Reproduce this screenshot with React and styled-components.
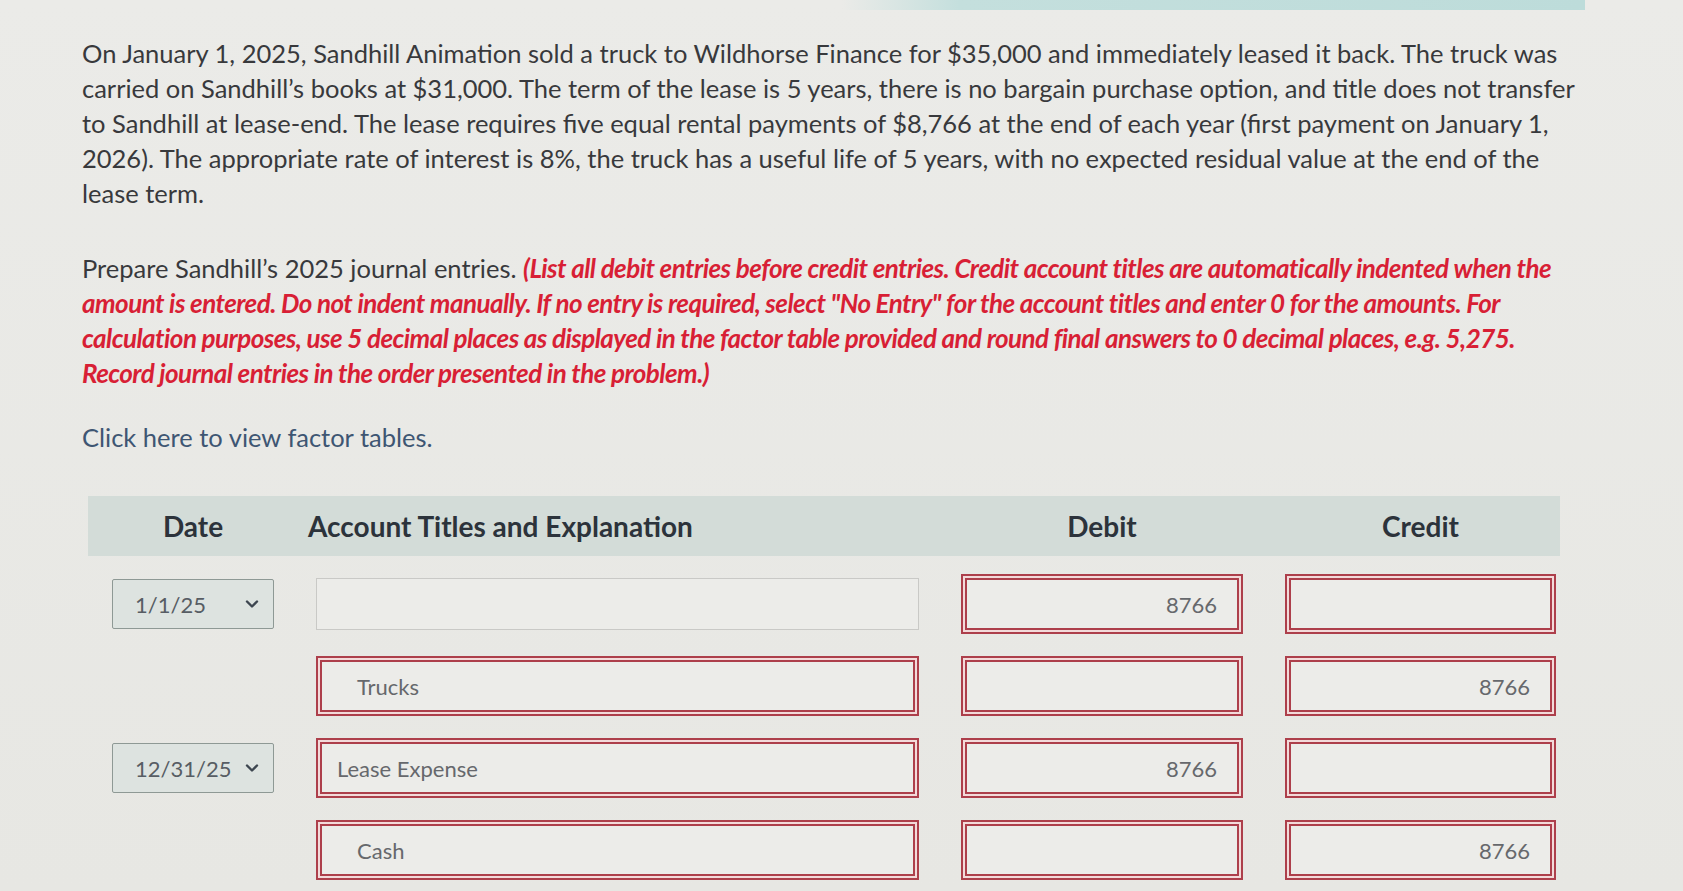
import React from 'react';
import styled, { createGlobalStyle } from 'styled-components';

const GlobalStyle = createGlobalStyle`
  body {
    margin: 0;
    background: #e9e9e6;
    font-family: Lato, "Open Sans", sans-serif;
    color: #3a3b3e;
  }
`;

const Page = styled.div`
  min-height: 891px;
  background: linear-gradient(to bottom, #ebebe8, #e7e7e3);
  overflow: hidden;
`;

const TopStrip = styled.div`
  height: 10px;
  background: linear-gradient(
    to right,
    transparent 0,
    transparent 50%,
    #c4dfdd 57%,
    #bddcda 94.2%,
    transparent 94.2%
  );
`;

const Content = styled.div`
  padding: 26px 0 0 82px;
`;

const Paragraph = styled.div`
  font-size: 25.5px;
  line-height: 35px;
  color: #38393c;
  margin-top: ${(p) => p.$gap || 0}px;
`;

const Line = styled.div`
  white-space: nowrap;
`;

const Warn = styled.span`
  color: #d81f35;
  font-size: 26px;
  font-weight: 700;
  font-style: italic;
  letter-spacing: -0.55px;
`;

const FactorLink = styled.div`
  margin-top: 29px;
  font-size: 25.5px;
  line-height: 35px;
  color: #3e5673;
  cursor: pointer;
`;

const Table = styled.div`
  margin: 41px 0 0 6px;
  width: 1472px;
`;

const Grid = styled.div`
  display: grid;
  grid-template-columns: 162px 603px 282px 271px;
  column-gap: 42px;
  padding-left: 24px;
  align-items: center;
`;

const Header = styled(Grid)`
  height: 60px;
  background: #d3dcd8;
`;

const HeadLabel = styled.div`
  font-size: 28px;
  font-weight: 700;
  color: #2c333b;
  text-align: ${(p) => p.$align || 'center'};
  margin-left: ${(p) => p.$shift || 0}px;
`;

const Rows = styled.div`
  display: flex;
  flex-direction: column;
  gap: 22px;
  margin-top: 18px;
`;

const Select = styled.div`
  height: 50px;
  box-sizing: border-box;
  display: flex;
  align-items: center;
  justify-content: space-between;
  padding: 0 14px 0 22px;
  background: #dde3e0;
  border: 1.5px solid #8e9995;
  border-radius: 2px;
  font-size: 22px;
  color: #575d64;
`;

const Field = styled.div`
  height: 52px;
  box-sizing: border-box;
  display: flex;
  align-items: center;
  justify-content: ${(p) => (p.$right ? 'flex-end' : 'flex-start')};
  padding: 0 ${(p) => (p.$right ? 20 : 0)}px 0 ${(p) => (p.$indent ? 35 : 15)}px;
  font-size: 22px;
  color: #66686c;
  background: #ecece9;
  border: ${(p) => (p.$plain ? '1.5px solid #c9c9c6' : '2px solid #ad3f4b')};
  box-shadow: ${(p) =>
    p.$plain ? 'none' : '0 0 0 2px #f3dada, 0 0 0 4px #ad3f4b'};
  margin: ${(p) => (p.$plain ? 0 : 4)}px;
`;

const Empty = styled.div``;

function Chevron() {
  return (
    <svg width="14" height="10" viewBox="0 0 14 10">
      <path d="M2 2.5 L7 7.5 L12 2.5" fill="none" stroke="#3d4650" strokeWidth="2.4" strokeLinecap="round" strokeLinejoin="round" />
    </svg>
  );
}

const entries = [
  { date: '1/1/25', account: '', plain: true, debit: '8766', credit: '' },
  { date: null, account: 'Trucks', indent: true, debit: '', credit: '8766' },
  { date: '12/31/25', account: 'Lease Expense', debit: '8766', credit: '' },
  { date: null, account: 'Cash', indent: true, debit: '', credit: '8766' },
];

export default function App() {
  return (
    <Page>
      <GlobalStyle />
      <TopStrip />
      <Content>
        <Paragraph>
          <Line>On January 1, 2025, Sandhill Animation sold a truck to Wildhorse Finance for $35,000 and immediately leased it back. The truck was</Line>
          <Line>carried on Sandhill’s books at $31,000. The term of the lease is 5 years, there is no bargain purchase option, and title does not transfer</Line>
          <Line>to Sandhill at lease-end. The lease requires five equal rental payments of $8,766 at the end of each year (first payment on January 1,</Line>
          <Line>2026). The appropriate rate of interest is 8%, the truck has a useful life of 5 years, with no expected residual value at the end of the</Line>
          <Line>lease term.</Line>
        </Paragraph>

        <Paragraph $gap={40}>
          <Line>
            Prepare Sandhill’s 2025 journal entries. <Warn>(List all debit entries before credit entries. Credit account titles are automatically indented when the</Warn>
          </Line>
          <Line><Warn>amount is entered. Do not indent manually. If no entry is required, select "No Entry" for the account titles and enter 0 for the amounts. For</Warn></Line>
          <Line><Warn>calculation purposes, use 5 decimal places as displayed in the factor table provided and round final answers to 0 decimal places, e.g. 5,275.</Warn></Line>
          <Line><Warn>Record journal entries in the order presented in the problem.)</Warn></Line>
        </Paragraph>

        <FactorLink>Click here to view factor tables.</FactorLink>

        <Table>
          <Header>
            <HeadLabel>Date</HeadLabel>
            <HeadLabel $align="left" $shift={-8}>Account Titles and Explanation</HeadLabel>
            <HeadLabel>Debit</HeadLabel>
            <HeadLabel>Credit</HeadLabel>
          </Header>
          <Rows>
            {entries.map((e, i) => (
              <Grid key={i}>
                {e.date ? (
                  <Select>
                    {e.date}
                    <Chevron />
                  </Select>
                ) : (
                  <Empty />
                )}
                <Field $plain={e.plain} $indent={e.indent}>{e.account}</Field>
                <Field $right>{e.debit}</Field>
                <Field $right>{e.credit}</Field>
              </Grid>
            ))}
          </Rows>
        </Table>
      </Content>
    </Page>
  );
}
